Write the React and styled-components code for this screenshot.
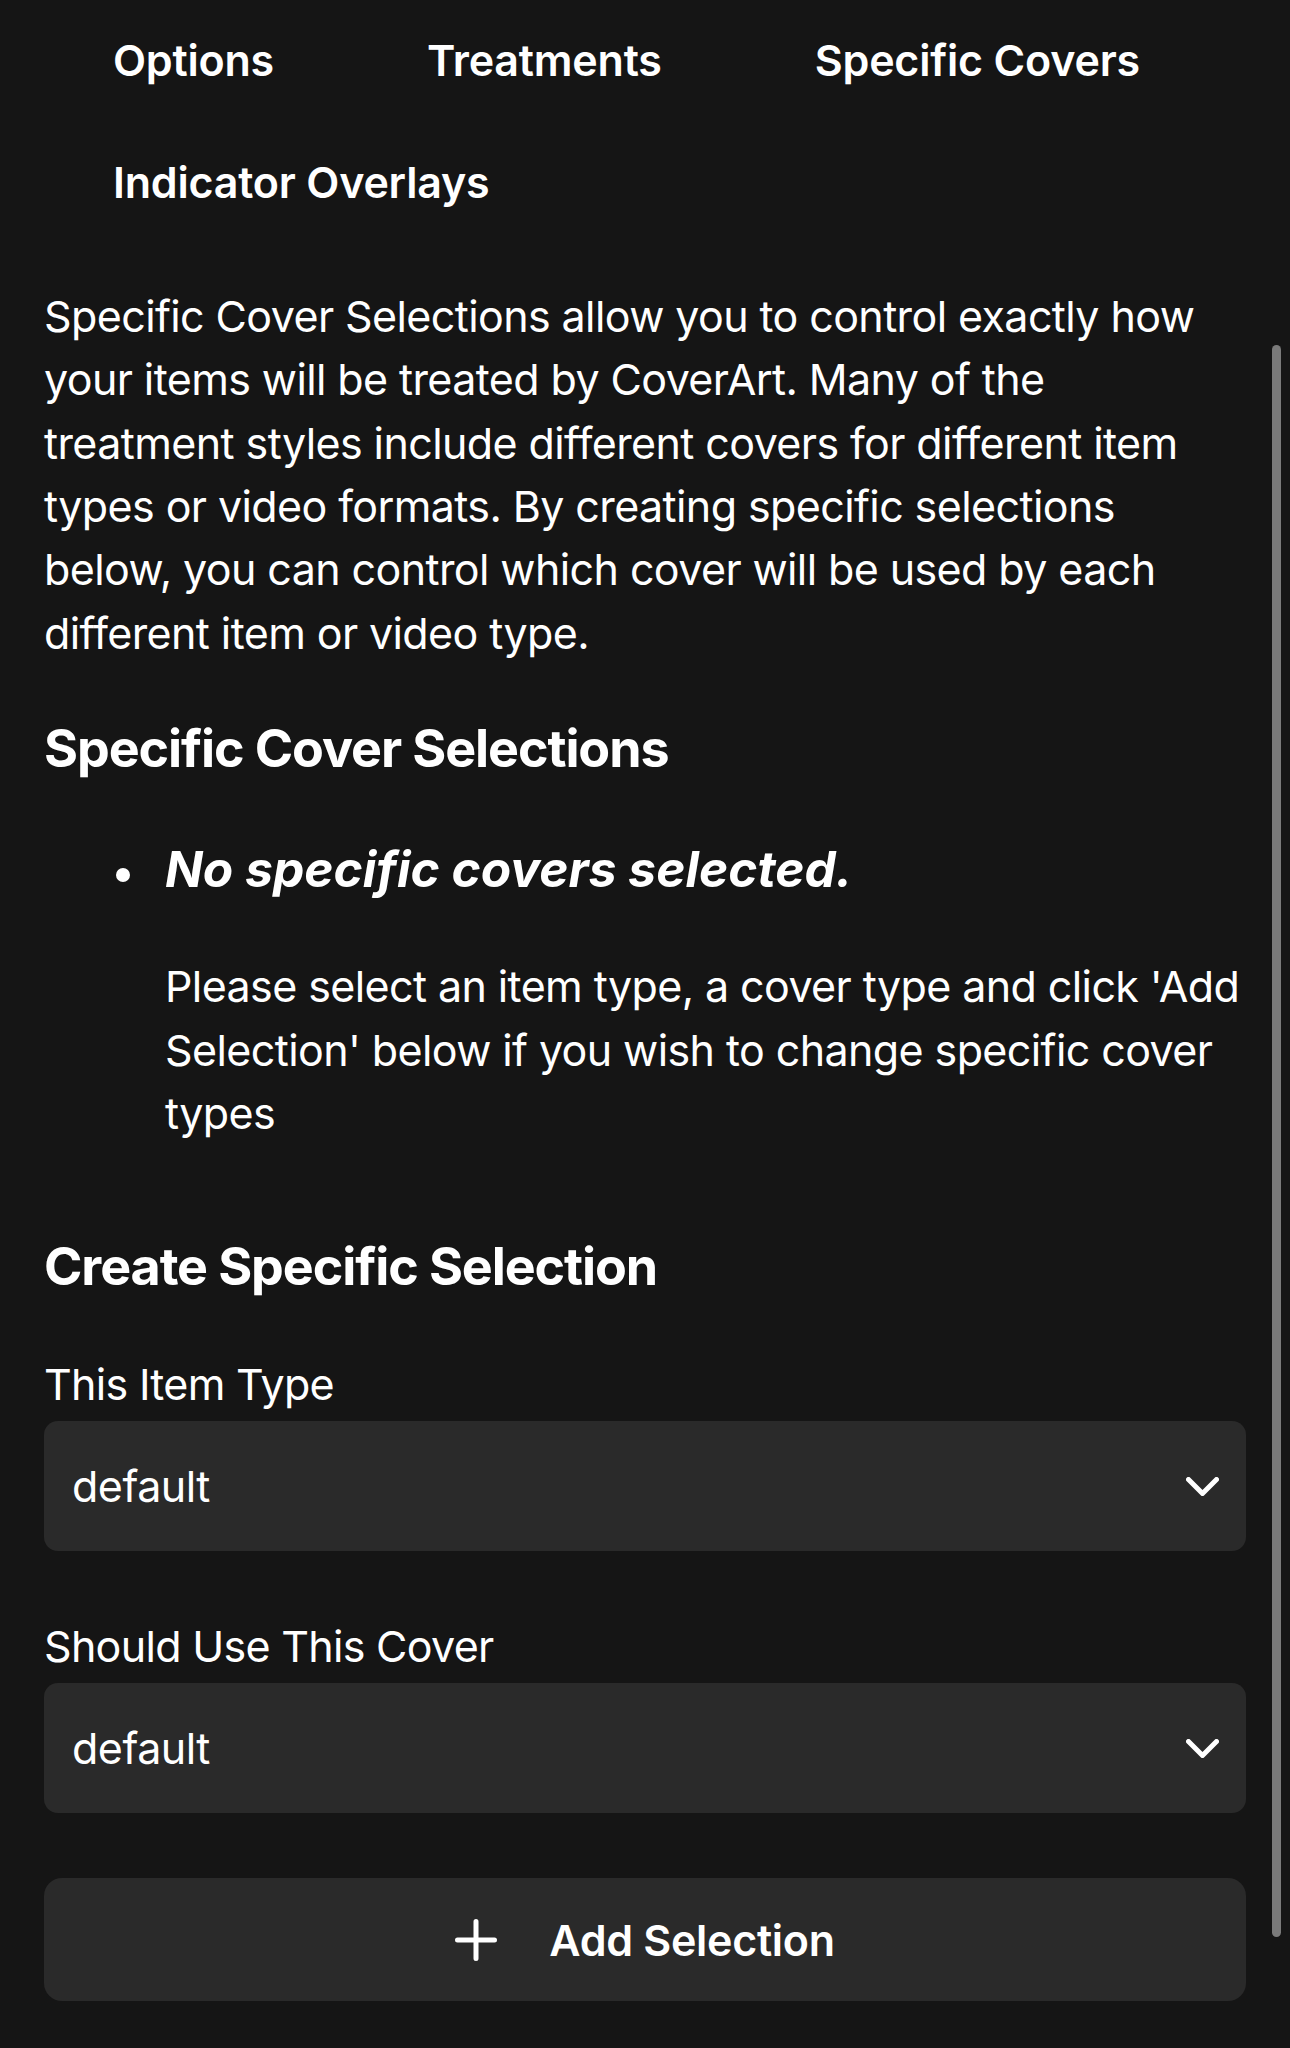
import React from 'react';
import styled, { createGlobalStyle } from 'styled-components';

const GlobalStyle = createGlobalStyle`
  html, body {
    margin: 0;
    padding: 0;
    background-color: #151515;
  }
  body {
    font-family: 'Inter', 'Noto Sans', sans-serif;
    color: #ffffff;
    -webkit-font-smoothing: antialiased;
  }
`;

const Page = styled.div`
  min-height: 2048px;
  box-sizing: border-box;
  padding: 0 44px;
  background-color: #151515;
`;

const Tabs = styled.nav`
  display: flex;
  flex-wrap: wrap;
  column-gap: 153px;
  padding-left: 69px;
`;

const Tab = styled.a`
  font-size: 43px;
  font-weight: 600;
  letter-spacing: -0.2px;
  line-height: 1.2;
  padding: 35px 0;
  color: #fff;
  text-decoration: none;
`;

const Intro = styled.p`
  margin: 42px 0 0;
  font-size: 43px;
  letter-spacing: -0.6px;
  line-height: 63.3px;
`;

const Heading = styled.h2`
  margin: ${(p) => p.$top}px 0 0;
  font-size: 52px;
  font-weight: 700;
  letter-spacing: -1.1px;
  line-height: 1.2;
`;

const List = styled.ul`
  list-style: none;
  margin: 61px 0 0;
  padding: 0 0 0 72px;
`;

const Item = styled.li`
  display: flex;
  gap: 35px;
`;

const Dot = styled.span`
  flex: none;
  width: 14px;
  height: 14px;
  margin-top: 27px;
  border-radius: 50%;
  background: #fff;
`;

const ItemBody = styled.div`
  flex: 1;
`;

const ItemTitle = styled.div`
  font-size: 49.7px;
  font-weight: 700;
  font-style: italic;
  line-height: 56px;
`;

const ItemText = styled.p`
  margin: 58px 0 0;
  font-size: 43px;
  letter-spacing: -0.6px;
  line-height: 63.5px;
`;

const Label = styled.div`
  margin-top: ${(p) => p.$top}px;
  font-size: 43px;
  letter-spacing: -0.7px;
  line-height: 48px;
`;

const Select = styled.div`
  display: flex;
  align-items: center;
  justify-content: space-between;
  height: 130px;
  margin-top: 13px;
  padding: 0 27px 0 28px;
  box-sizing: border-box;
  border-radius: 14px;
  background-color: #2a2a2a;
  font-size: 43px;
  letter-spacing: -0.5px;
`;

const Button = styled.button`
  display: flex;
  align-items: center;
  justify-content: center;
  gap: 52px;
  width: 100%;
  height: 123px;
  margin-top: 65px;
  border: none;
  border-radius: 18px;
  background-color: #2a2a2a;
  color: #fff;
  font-family: inherit;
  font-size: 43px;
  font-weight: 600;
  letter-spacing: -0.3px;
`;

const Scrollbar = styled.div`
  position: fixed;
  top: 345px;
  right: 9px;
  width: 9px;
  height: 1592px;
  border-radius: 5px;
  background-color: #7a7a7a;
`;

const Chevron = () => (
  <svg width="33" height="19" viewBox="0 0 33 19" fill="none">
    <polyline
      points="2.5,2.5 16.5,16.5 30.5,2.5"
      stroke="#fff"
      strokeWidth="5"
      strokeLinecap="round"
      strokeLinejoin="round"
    />
  </svg>
);

const Plus = () => (
  <svg width="42" height="42" viewBox="0 0 42 42" fill="none">
    <path d="M21 2.5v37M2.5 21h37" stroke="#fff" strokeWidth="5" strokeLinecap="round" />
  </svg>
);

const App = () => {
  return (
    <Page>
      <GlobalStyle />
      <Tabs>
        <Tab href="#">Options</Tab>
        <Tab href="#">Treatments</Tab>
        <Tab href="#">Specific Covers</Tab>
        <Tab href="#">Indicator Overlays</Tab>
      </Tabs>

      <Intro>
        Specific Cover Selections allow you to control exactly how your items will be treated by
        CoverArt. Many of the treatment styles include different covers for different item types or
        video formats. By creating specific selections below, you can control which cover will be
        used by each different item or video type.
      </Intro>

      <Heading $top={53}>Specific Cover Selections</Heading>
      <List>
        <Item>
          <Dot />
          <ItemBody>
            <ItemTitle>No specific covers selected.</ItemTitle>
            <ItemText>
              Please select an item type, a cover type and click 'Add Selection' below if you wish
              to change specific cover types
            </ItemText>
          </ItemBody>
        </Item>
      </List>

      <Heading $top={90}>Create Specific Selection</Heading>
      <Label $top={62}>This Item Type</Label>
      <Select>
        <span>default</span>
        <Chevron />
      </Select>

      <Label $top={71}>Should Use This Cover</Label>
      <Select>
        <span>default</span>
        <Chevron />
      </Select>

      <Button>
        <Plus />
        <span>Add Selection</span>
      </Button>

      <Scrollbar />
    </Page>
  );
};

export default App;
